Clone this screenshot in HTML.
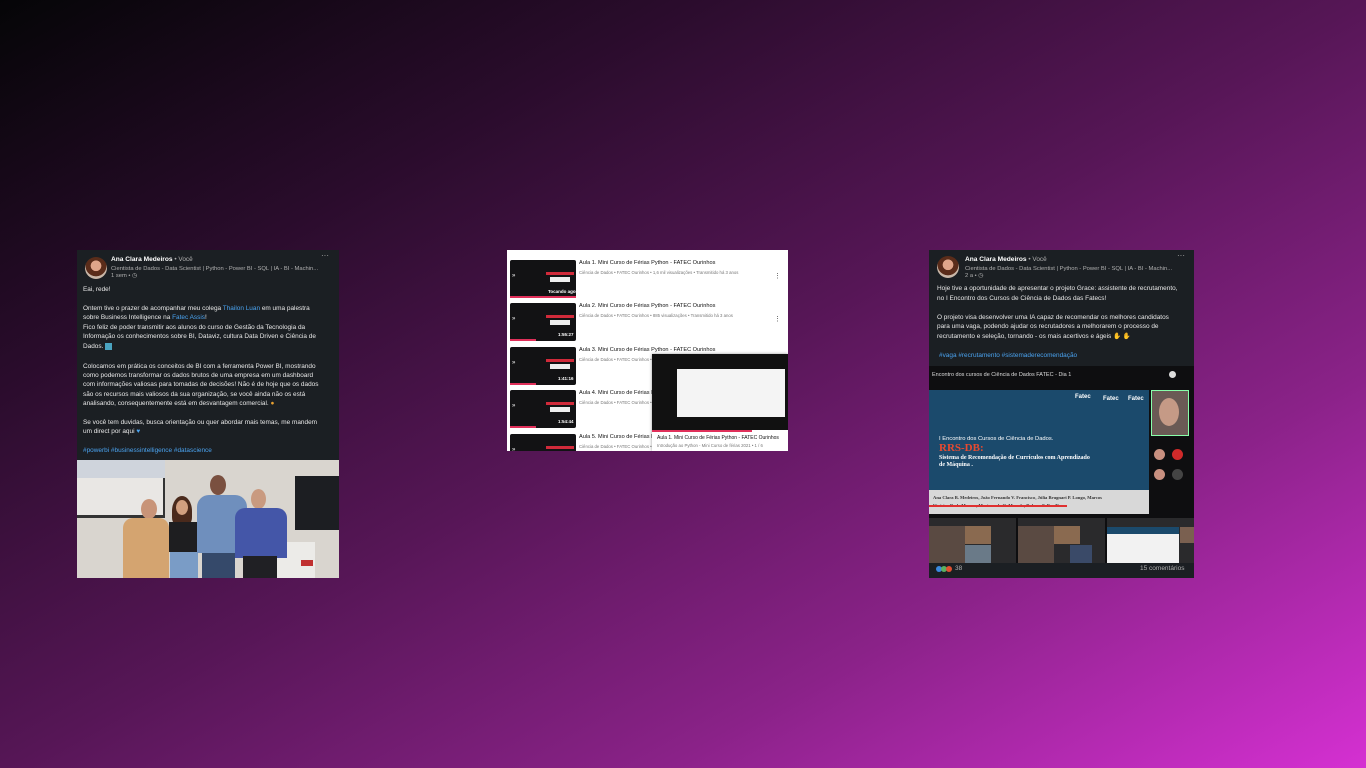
<!DOCTYPE html>
<html><head><meta charset="utf-8">
<style>
*{margin:0;padding:0;box-sizing:border-box}
body{width:1366px;height:768px;overflow:hidden;position:relative;font-family:"Liberation Sans",sans-serif;
background:linear-gradient(to bottom right,#050507 0%,#2a0c2c 25%,#561656 50%,#8a2288 74%,#d530d2 100%);}
.card{position:absolute;background:#1b1f23;overflow:hidden}
.t{position:absolute;white-space:nowrap;color:#e8e8e8;font-size:6.45px;line-height:8px}
.b{color:#4aa3f0}
.av{position:absolute;width:22px;height:22px;border-radius:50%;background:radial-gradient(circle at 50% 40%,#e0a58a 0 30%,#5a2c1a 32% 60%,#c9b7a8 62%)}
.nm{font-weight:bold;color:#fff;font-size:6.6px}
.g{color:#b0b0b0}
.abs{position:absolute}
</style></head><body>

<!-- CARD 1 -->
<div class="card" style="left:77px;top:250px;width:262px;height:328px">
<div class="av" style="left:8px;top:7px"></div>
<div class="t" style="left:34px;top:6px"><span class="nm">Ana Clara Medeiros</span> <span class="g">• Você</span></div>
<div class="t g" style="left:34px;top:15px;font-size:5.8px">Cientista de Dados - Data Scientist | Python - Power BI - SQL | IA - BI - Machin...</div>
<div class="t g" style="left:34px;top:22px;font-size:5.8px">1 sem • ◷</div>
<div class="t g" style="left:244px;top:2px;font-size:8px">···</div>
<div class="t" style="left:6px;top:36px">Eai, rede!</div>
<div class="t" style="left:6px;top:55px">Ontem tive o prazer de acompanhar meu colega <span class="b">Thailon Luan</span> em uma palestra</div>
<div class="t" style="left:6px;top:64px">sobre Business Intelligence na <span class="b">Fatec Assis</span>!</div>
<div class="t" style="left:6px;top:74px">Fico feliz de poder transmitir aos alunos do curso de Gestão da Tecnologia da</div>
<div class="t" style="left:6px;top:83px">Informação os conhecimentos sobre BI, Dataviz, cultura Data Driven e Ciência de</div>
<div class="t" style="left:6px;top:93px">Dados. <span style="background:#4aa3c0;color:#4aa3c0">▮▮</span></div>
<div class="t" style="left:6px;top:113px">Colocamos em prática os conceitos de BI com a ferramenta Power BI, mostrando</div>
<div class="t" style="left:6px;top:122px">como podemos transformar os dados brutos de uma empresa em um dashboard</div>
<div class="t" style="left:6px;top:131px">com informações valiosas para tomadas de decisões! Não é de hoje que os dados</div>
<div class="t" style="left:6px;top:141px">são os recursos mais valiosos da sua organização, se você ainda não os está</div>
<div class="t" style="left:6px;top:150px">analisando, consequentemente está em desvantagem comercial. <span style="color:#e8a030">●</span></div>
<div class="t" style="left:6px;top:169px">Se você tem duvidas, busca orientação ou quer abordar mais temas, me mandem</div>
<div class="t" style="left:6px;top:178px">um direct por aqui <span class="b">♥</span></div>
<div class="t b" style="left:6px;top:197px">#powerbi #businessintelligence #datascience</div>
<div class="abs" style="left:0;top:210px;width:262px;height:118px;background:#d9d5cf">
 <div class="abs" style="left:0;top:0;width:88px;height:58px;background:#e9e7e4;border-right:2px solid #333;border-bottom:3px solid #333"></div>
 <div class="abs" style="left:0;top:0;width:88px;height:18px;background:#cfd4dc"></div>
 <div class="abs" style="left:218px;top:16px;width:44px;height:54px;background:#1c1e22"></div>
 <div class="abs" style="left:200px;top:82px;width:38px;height:36px;background:#ecebe8"></div>
 <div class="abs" style="left:224px;top:100px;width:12px;height:6px;background:#c03030"></div>
 <div class="abs" style="left:64px;top:39px;width:16px;height:20px;border-radius:50%;background:#c89478"></div>
 <div class="abs" style="left:46px;top:58px;width:46px;height:60px;border-radius:10px 10px 0 0;background:#d4a470"></div>
 <div class="abs" style="left:95px;top:36px;width:20px;height:30px;border-radius:50% 50% 30% 30%;background:#4a2a1c"></div>
 <div class="abs" style="left:99px;top:40px;width:12px;height:15px;border-radius:50%;background:#d2a080"></div>
 <div class="abs" style="left:92px;top:62px;width:28px;height:30px;background:#1e1e20"></div>
 <div class="abs" style="left:93px;top:92px;width:28px;height:26px;background:#7a9cc6"></div>
 <div class="abs" style="left:133px;top:15px;width:16px;height:20px;border-radius:50%;background:#7a5040"></div>
 <div class="abs" style="left:120px;top:35px;width:50px;height:58px;border-radius:12px 12px 0 0;background:#6f8fbd"></div>
 <div class="abs" style="left:125px;top:93px;width:33px;height:25px;background:#35496a"></div>
 <div class="abs" style="left:174px;top:29px;width:15px;height:20px;border-radius:50%;background:#c99a80"></div>
 <div class="abs" style="left:158px;top:48px;width:52px;height:50px;border-radius:10px 10px 0 0;background:#4456a8"></div>
 <div class="abs" style="left:166px;top:96px;width:34px;height:22px;background:#202024"></div>
</div>
</div>

<!-- CARD 2 -->
<div class="card" style="left:507px;top:250px;width:281px;height:201px;background:#fff">
 <div id="yt"></div>
</div>

<!-- CARD 3 -->
<div class="card" style="left:929px;top:250px;width:265px;height:328px">
<div class="av" style="left:8px;top:6px"></div>
<div class="t" style="left:36px;top:6px"><span class="nm">Ana Clara Medeiros</span> <span class="g">• Você</span></div>
<div class="t g" style="left:36px;top:15px;font-size:5.8px">Cientista de Dados - Data Scientist | Python - Power BI - SQL | IA - BI - Machin...</div>
<div class="t g" style="left:36px;top:22px;font-size:5.8px">2 a • ◷</div>
<div class="t g" style="left:248px;top:2px;font-size:8px">···</div>
<div class="t" style="left:8px;top:35px">Hoje tive a oportunidade de apresentar o projeto Grace: assistente de recrutamento,</div>
<div class="t" style="left:8px;top:45px">no I Encontro dos Cursos de Ciência de Dados das Fatecs!</div>
<div class="t" style="left:8px;top:64px">O projeto visa desenvolver uma IA capaz de recomendar os melhores candidatos</div>
<div class="t" style="left:8px;top:73px">para uma vaga, podendo ajudar os recrutadores a melhorarem o processo de</div>
<div class="t" style="left:8px;top:83px">recrutamento e seleção, tornando - os mais acertivos e ágeis <span style="color:#f0b030">✋ ✋</span></div>
<div class="t b" style="left:10px;top:102px">#vaga #recrutamento #sistemaderecomendação</div>
<div class="abs" style="left:0;top:116px;width:265px;height:197px;background:#0e0e10">
 <div class="t" style="left:3px;top:5px;font-size:5.5px;color:#ddd">Encontro dos cursos de Ciência de Dados FATEC - Dia 1</div>
 <div class="abs" style="left:240px;top:5px;width:7px;height:7px;border-radius:50%;background:#ddd"></div>
 <div class="abs" style="left:0;top:24px;width:220px;height:100px;background:#1b4a6c"></div>
 <div class="t" style="left:146px;top:27px;color:#fff;font-weight:bold;font-size:6px">Fatec</div>
 <div class="t" style="left:174px;top:29px;color:#fff;font-weight:bold;font-size:6px">Fatec</div>
 <div class="t" style="left:199px;top:29px;color:#fff;font-weight:bold;font-size:6px">Fatec</div>
 <div class="t" style="left:10px;top:69px;color:#fff;font-size:5.8px">I Encontro dos Cursos de Ciência de Dados.</div>
 <div class="t" style="left:10px;top:76px;color:#e84a30;font-weight:bold;font-size:11px;line-height:12px;font-family:'Liberation Serif',serif">RRS-DB:</div>
 <div class="t" style="left:10px;top:89px;color:#fff;font-weight:bold;font-size:6px;line-height:7px;font-family:'Liberation Serif',serif">Sistema de Recomendação de Currículos com Aprendizado<br>de Máquina .</div>
 <div class="abs" style="left:0;top:124px;width:220px;height:24px;background:#d8d8d8"></div>
 <div class="t" style="left:4px;top:128px;color:#333;font-size:4.6px;font-family:'Liberation Serif',serif;font-weight:bold">Ana Clara B. Medeiros, João Fernando V. Francisco, Júlia Brugnari P. Longo, Marcos<br>Vinícius R. de Moraes, Mariana de O. Macedo, Robson F. Bonilla</div>
 <div class="abs" style="left:0;top:139px;width:138px;height:1.5px;background:#e03030"></div>
 <div class="abs" style="left:222px;top:24px;width:38px;height:46px;background:#6a5a55;border:1px solid #8fa"></div>
 <div class="abs" style="left:230px;top:32px;width:20px;height:28px;border-radius:50%;background:#c59a86"></div>
 <div class="abs" style="left:225px;top:83px;width:11px;height:11px;border-radius:50%;background:#c89080"></div>
 <div class="abs" style="left:243px;top:83px;width:11px;height:11px;border-radius:50%;background:#d02a2a"></div>
 <div class="abs" style="left:225px;top:103px;width:11px;height:11px;border-radius:50%;background:#c89080"></div>
 <div class="abs" style="left:243px;top:103px;width:11px;height:11px;border-radius:50%;background:#444"></div>
 <div class="abs" style="left:0;top:152px;width:87px;height:45px;background:#2a2a2c">
  <div class="abs" style="left:0;top:8px;width:36px;height:37px;background:#5a4a42"></div>
  <div class="abs" style="left:36px;top:8px;width:26px;height:18px;background:#8a6a50"></div>
  <div class="abs" style="left:36px;top:27px;width:26px;height:18px;background:#6a7a88"></div>
 </div>
 <div class="abs" style="left:89px;top:152px;width:87px;height:45px;background:#2a2a2c">
  <div class="abs" style="left:0;top:8px;width:36px;height:37px;background:#5a4a42"></div>
  <div class="abs" style="left:36px;top:8px;width:26px;height:18px;background:#8a6a50"></div>
  <div class="abs" style="left:52px;top:27px;width:22px;height:18px;background:#3a4a68"></div>
 </div>
 <div class="abs" style="left:178px;top:152px;width:87px;height:45px;background:#2a2a2c">
  <div class="abs" style="left:0;top:9px;width:72px;height:36px;background:#f2f2f2"></div>
  <div class="abs" style="left:0;top:9px;width:72px;height:7px;background:#1b4a6c"></div>
  <div class="abs" style="left:73px;top:9px;width:14px;height:16px;background:#7a6050"></div>
 </div>
</div>
<div class="abs" style="left:7px;top:316px;width:6px;height:6px;border-radius:50%;background:#3a8ae0"></div>
<div class="abs" style="left:12px;top:316px;width:6px;height:6px;border-radius:50%;background:#5ab060"></div>
<div class="abs" style="left:17px;top:316px;width:6px;height:6px;border-radius:50%;background:#e05030"></div>
<div class="t g" style="left:26px;top:315px;font-size:6.5px">38</div>
<div class="t g" style="left:211px;top:315px;font-size:6.5px">15 comentários</div>
</div>

<script>
var h='';var tops=[10,53,97,140,184];var t=['Tocando agora','1:55:27','1:41:16','1:54:44',''];
var v=['1,6 mil visualizações • Transmitido há 3 anos','885 visualizações • Transmitido há 3 anos','6','3','3'];
for(var i=0;i<5;i++){var y=tops[i];
h+='<div class="abs" style="left:3px;top:'+y+'px;width:66px;height:38px;background:#121214;border-radius:2px"><div class="abs" style="left:36px;top:12px;width:28px;height:3px;background:#d02a3a"></div><div class="abs" style="left:40px;top:17px;width:20px;height:5px;background:#eee"></div><div class="abs" style="left:0;top:36px;width:'+(i==0?66:26)+'px;height:2px;background:#e0305a"></div><div class="t" style="left:'+(i==0?38:48)+'px;top:28px;font-size:4.5px;color:#fff;font-weight:bold">'+t[i]+'</div><div class="t" style="left:2px;top:12px;color:#fff;font-size:6px">»</div></div>';
h+='<div class="t" style="left:72px;top:'+(y-1)+'px;color:#111;font-size:5.6px">Aula '+(i+1)+'. Mini Curso de Férias Python - FATEC Ourinhos</div>';
h+='<div class="t" style="left:72px;top:'+(y+9)+'px;color:#777;font-size:4.3px">Ciência de Dados • FATEC Ourinhos • '+v[i]+'</div>';
if(i<2)h+='<div class="t" style="left:267px;top:'+(y+13)+'px;color:#444;font-size:7px">⋮</div>';}
h+='<div class="abs" style="left:145px;top:104px;width:136px;height:97px;background:#fff;box-shadow:0 0 3px rgba(0,0,0,.4)"><div class="abs" style="left:0;top:0;width:136px;height:76px;background:#111"></div><div class="abs" style="left:25px;top:15px;width:108px;height:48px;background:#f4f4f4"></div><div class="abs" style="left:0;top:76px;width:100px;height:2px;background:#e0305a"></div><div class="t" style="left:5px;top:80px;color:#111;font-size:5px">Aula 1. Mini Curso de Férias Python - FATEC Ourinhos</div><div class="t" style="left:5px;top:88px;color:#777;font-size:4.3px">Introdução ao Python - Mini Curso de férias 2021 • 1 / 6</div></div>';
document.getElementById('yt').innerHTML=h;
</script>
</body></html>
